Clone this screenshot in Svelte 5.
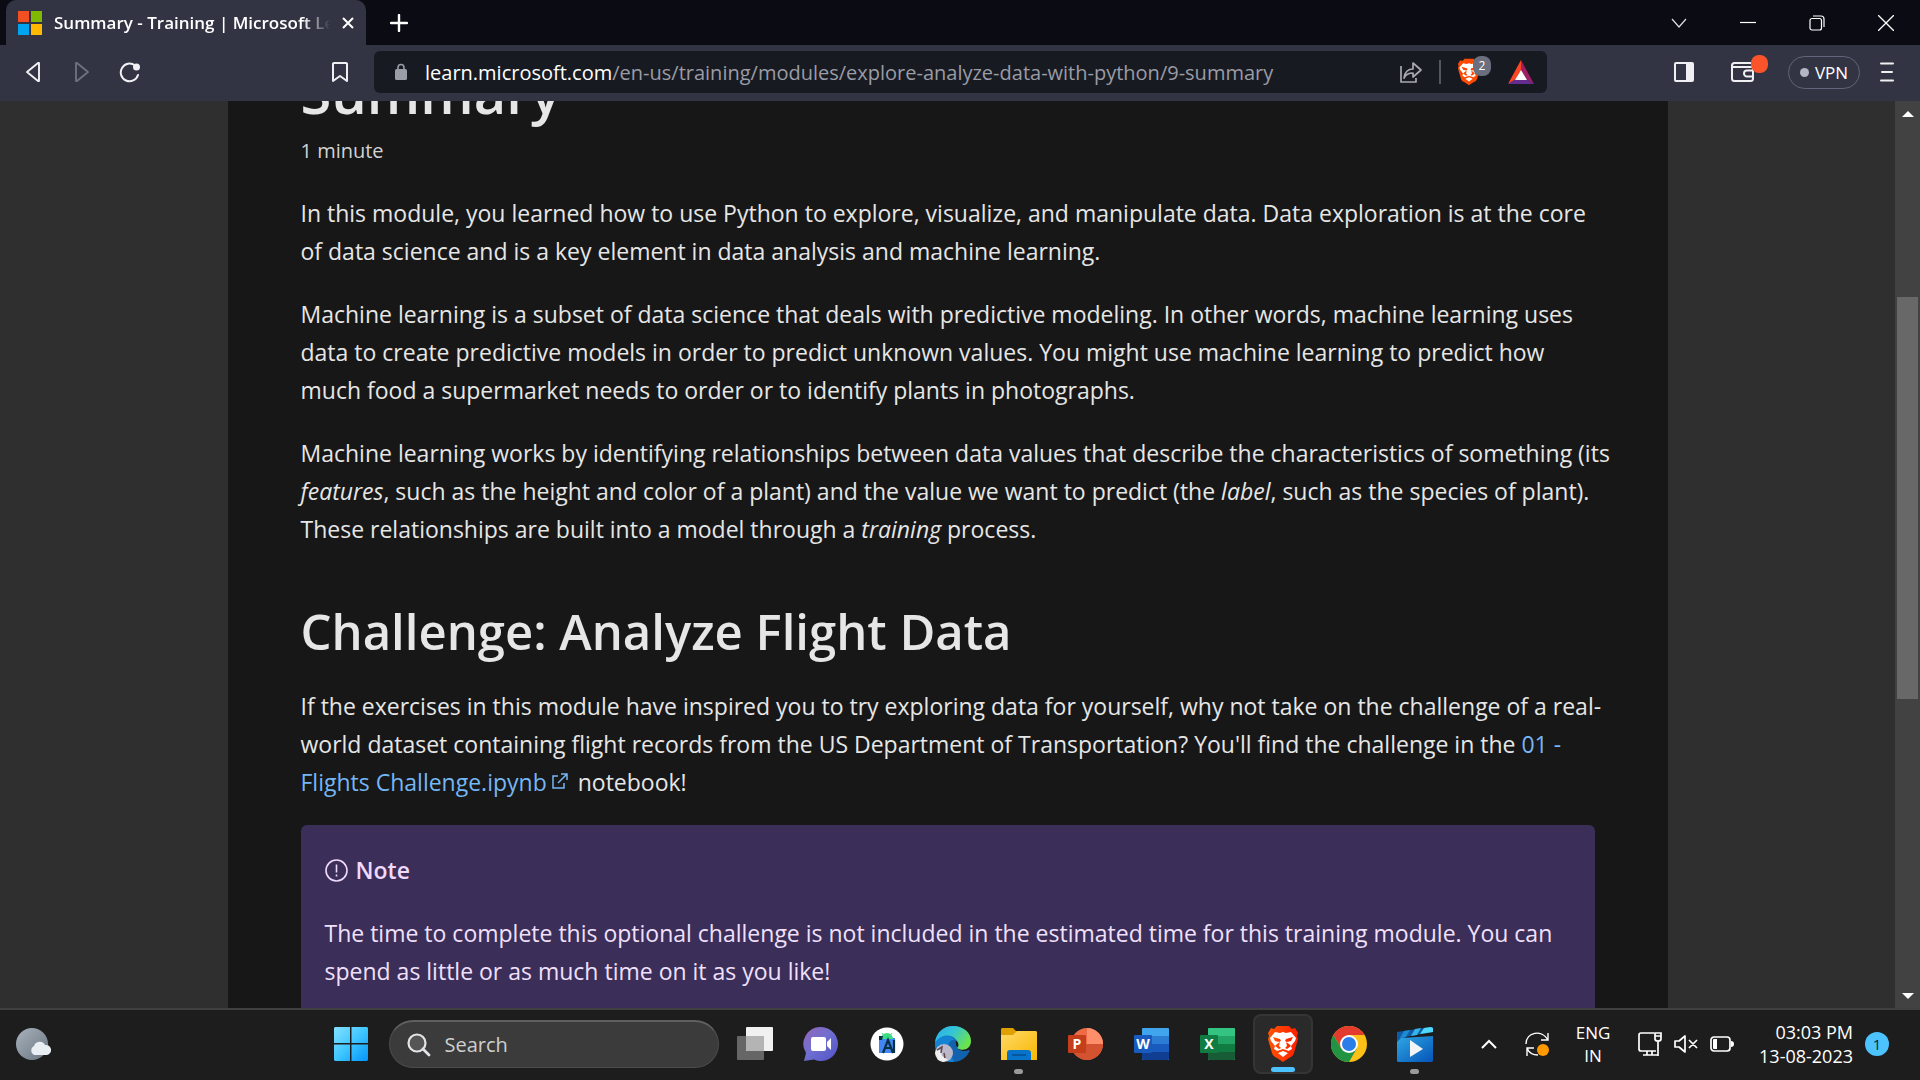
<script>
  const officeApps = {
    word: { letter: 'W', bars: ['#41a5ee', '#2b7cd3', '#185abd', '#103f91'], tile: '#185abd' },
    excel: { letter: 'X', bars: ['#33c481', '#21a366', '#107c41', '#185c37'], tile: '#107c41' }
  };
</script>

{#snippet lion(fill)}
  <path {fill} d="M12 0h12l3 3 3-1 3 5-1 3 1 3-4 14c-1 3-3 4-5 5l-6 4-6-4c-2-1-4-2-5-5L3 13l1-3-1-3 3-5 3 1z" />
  <path fill="#fff" d="M10 6l5 1 3-1 3 1 5-1 5 6-1 3-4 5 1 3-5 3 1 1-5 4-5-4 1-1-5-3 1-3-4-5-1-3z" />
  <path {fill} d="M8 11l7 2 1 2-2 1-4-1zM28 11l-7 2-1 2 2 1 4-1zM15 16l-1 4 2 2-2 1-4-3 2-2zM21 16l1 4-2 2 2 1 4-3-2-2zM12 25l6-2 6 2-1 2-5-2-5 2z" />
{/snippet}

{#snippet office(app)}
  <svg width="36" height="36" viewBox="0 0 36 36" aria-hidden="true">
    <rect x="9" y="2" width="27" height="32" rx="1" fill={app.bars[0]} />
    <path d="M9 10h27v8H9z" fill={app.bars[1]} />
    <path d="M9 18h27v8H9z" fill={app.bars[2]} />
    <path d="M9 26h27v7l-1 1H10l-1-1z" fill={app.bars[3]} />
    <rect x="1" y="9" width="18" height="18" rx="1" fill={app.tile} />
    <text x="10" y="23" text-anchor="middle" class="letter">{app.letter}</text>
  </svg>
{/snippet}

<div class="screen">
  <header class="titlebar">
    <div class="tab">
      <svg width="24" height="24" viewBox="0 0 24 24" aria-hidden="true">
        <path fill="#f25022" d="M0 0h11v11H0z" /><path fill="#7fba00" d="M13 0h11v11H13z" />
        <path fill="#00a4ef" d="M0 13h11v11H0z" /><path fill="#ffb900" d="M13 13h11v11H13z" />
      </svg>
      <span class="tab-title">Summary - Training | Microsoft Learn</span>
      <button aria-label="Close tab">
        <svg width="12" height="12" viewBox="0 0 12 12" stroke="#fff" stroke-width="2"><path d="M1 1l10 10M11 1 1 11" /></svg>
      </button>
    </div>
    <button class="new-tab" aria-label="New tab">
      <svg width="18" height="18" viewBox="0 0 18 18" stroke="#fff" stroke-width="2.4" stroke-linecap="round"><path d="M9 1v16M1 9h16" /></svg>
    </button>
    <div class="window-controls">
      <button aria-label="Search tabs">
        <svg width="16" height="16" viewBox="0 0 16 16" fill="none" stroke="#ddd" stroke-width="1.2"><path d="M1 4l7 8 7-8" /></svg>
      </button>
      <button aria-label="Minimize">
        <svg width="16" height="16" viewBox="0 0 16 16" stroke="#fff" stroke-width="1.2"><path d="M0 7.500h16" /></svg>
      </button>
      <button aria-label="Restore">
        <svg width="16" height="16" viewBox="0 0 16 16" fill="none" stroke="#fff" stroke-width="1.2"><rect x="1" y="3.500" width="11.500" height="11.500" rx="2" /><path d="M4 1h8c2 0 3 1 3 3v8" /></svg>
      </button>
      <button aria-label="Close">
        <svg width="16" height="16" viewBox="0 0 16 16" stroke="#fff" stroke-width="1.3"><path d="M0 0l16 16M16 0 0 16" /></svg>
      </button>
    </div>
  </header>

  <nav class="toolbar" aria-label="Browser">
    <button aria-label="Back">
      <svg width="20" height="22" viewBox="0 0 20 22" fill="none" stroke="#f0f0f4" stroke-width="1.9" stroke-linejoin="round"><path d="M15 2v18h-1L3 11l11-9z" /></svg>
    </button>
    <button aria-label="Forward" disabled>
      <svg width="20" height="22" viewBox="0 0 20 22" fill="none" stroke="#6d707e" stroke-width="1.9" stroke-linejoin="round"><path d="M4 2v18h1l11-9L5 2z" /></svg>
    </button>
    <button aria-label="Reload">
      <svg width="22" height="22" viewBox="0 0 22 22" fill="none" stroke="#f0f0f4" stroke-width="2" stroke-linecap="round"><path d="M16 4.500A8.800 8.800 0 1 0 19 14" /><circle cx="17.500" cy="6" r="2.500" fill="#f0f0f4" /></svg>
    </button>
    <button class="bookmark" aria-label="Bookmark this page">
      <svg width="18" height="22" viewBox="0 0 18 22" fill="none" stroke="#f0f0f4" stroke-width="2" stroke-linejoin="round"><path d="M2 2.500Q2 2 3 2h12q1 0 1 .5V20l-7-5-7 5z" /></svg>
    </button>
    <div class="address">
      <svg width="12" height="18" viewBox="0 0 12 18" aria-hidden="true"><rect y="6" width="12" height="11" rx="1.500" fill="#9a9ca6" /><path d="M3 7V4.500a3 3 0 0 1 6 0V7" fill="none" stroke="#9a9ca6" stroke-width="1.600" /></svg>
      <a class="url" href="#top"><span>learn.microsoft.com</span>/en-us/training/modules/explore-analyze-data-with-python/9-summary</a>
      <button aria-label="Share">
        <svg width="24" height="24" viewBox="0 0 24 24" fill="none" stroke="#a8aab0" stroke-width="1.700" stroke-linejoin="round"><path d="M2 6v16h15v-4" /><path d="M5 18c1-7 5-9 9-9V3l8 7-8 7v-4c-4 0-7 1-9 5z" /></svg>
      </button>
      <i class="divider"></i>
      <button class="shields" aria-label="Brave Shields, 2 blocked">
        <svg width="24" height="28" viewBox="2 -1 32 38">{@render lion('#fb4b05')}</svg>
        <span class="count">2</span>
      </button>
      <button aria-label="Brave Rewards">
        <svg width="28" height="24" viewBox="0 0 28 24"><path fill="#ff4724" d="M14 0 1 24l8-5 5-9z" /><path fill="#9e1f63" d="M14 0v10l5 9 8 5z" /><path fill="#662d91" d="M1 24h26l-8-5H9z" /><path fill="#fff" d="M14 10 8 20h12z" /></svg>
      </button>
    </div>
    <div class="actions">
      <button aria-label="Side panel">
        <svg width="20" height="20" viewBox="0 0 20 20"><rect x="1" y="1" width="18" height="18" rx="1" fill="none" stroke="#f0f0f4" stroke-width="2" /><path fill="#f0f0f4" d="M12 1h7v18h-7z" /></svg>
      </button>
      <button class="wallet" aria-label="Wallet">
        <svg width="26" height="22" viewBox="0 0 26 22" fill="none" stroke="#f0f0f4" stroke-width="2" stroke-linejoin="round"><rect x="2" y="2" width="21" height="18" rx="2.500" /><path d="M2 6h20M23 9.500h-6a3 3 0 0 0 0 6h6" /></svg>
        <span class="alert"></span>
      </button>
      <button class="vpn"><i></i>VPN</button>
      <button class="menu" aria-label="Menu">
        <svg width="14" height="20" viewBox="0 0 14 20" stroke="#f0f0f4" stroke-width="2" stroke-linecap="round"><path d="M1 1.500h12M2 10h10M1 18.500h12" /></svg>
      </button>
    </div>
  </nav>

  <div class="viewport">
    <main class="article" id="top">
      <h1>Summary</h1>
      <div class="duration">1 minute</div>
      <p>In this module, you learned how to use Python to explore, visualize, and manipulate data. Data exploration is at the core<br /> of data science and is a key element in data analysis and machine learning.</p>
      <p>Machine learning is a subset of data science that deals with predictive modeling. In other words, machine learning uses<br /> data to create predictive models in order to predict unknown values. You might use machine learning to predict how<br /> much food a supermarket needs to order or to identify plants in photographs.</p>
      <p>Machine learning works by identifying relationships between data values that describe the characteristics of something (its<br /> <em>features</em>, such as the height and color of a plant) and the value we want to predict (the <em>label</em>, such as the species of plant).<br /> These relationships are built into a model through a <em>training</em> process.</p>
      <h2>Challenge: Analyze Flight Data</h2>
      <p>If the exercises in this module have inspired you to try exploring data for yourself, why not take on the challenge of a real-<br />world dataset containing flight records from the US Department of Transportation? You'll find the challenge in the <a href="#challenge">01 -<br /> Flights Challenge.ipynb<svg class="external" width="16" height="16" viewBox="0 0 16 16" fill="none" stroke="currentColor" stroke-width="1.500"><path d="M6 3H1v12h11v-5M9 1h6v6M15 1 6 10" /></svg></a> notebook!</p>
      <aside class="note">
        <div class="note-title">
          <svg width="23" height="23" viewBox="0 0 23 23" fill="none" stroke="currentColor" stroke-width="1.600" aria-hidden="true"><circle cx="11.500" cy="11.500" r="10.500" /><path d="M11.500 5.500v8M11.500 15.500v2" /></svg>
          Note
        </div>
        <p>The time to complete this optional challenge is not included in the estimated time for this training module. You can spend as little or as much time on it as you like!</p>
      </aside>
    </main>
    <div class="scrollbar" aria-hidden="true">
      <svg width="12" height="6" viewBox="0 0 12 6"><path fill="#fff" d="M0 6 6 0l6 6z" /></svg>
      <div class="track"><div class="thumb"></div></div>
      <svg width="12" height="6" viewBox="0 0 12 6"><path fill="#fff" d="M0 0l6 6 6-6z" /></svg>
    </div>
  </div>

  <footer class="taskbar">
    <button class="weather" aria-label="Weather">
      <svg width="36" height="34" viewBox="0 0 36 34">
        <defs><linearGradient id="moon" x2="1" y2="1"><stop stop-color="#a9b3bd" /><stop offset="1" stop-color="#6b7580" /></linearGradient></defs>
        <circle cx="17" cy="17" r="16" fill="url(#moon)" />
        <path fill="#e9eef3" d="M19 28a5 5 0 0 1 0-9 6 6 0 0 1 11-1 5 5 0 0 1 2 10z" />
      </svg>
    </button>
    <div class="apps">
      <button aria-label="Start">
        <svg width="36" height="36" viewBox="0 0 36 36">
          <defs><linearGradient id="win" gradientUnits="userSpaceOnUse" x1="0" y1="0" x2="36" y2="36"><stop stop-color="#8ae2ff" /><stop offset=".5" stop-color="#3fc6ff" /><stop offset="1" stop-color="#0091f8" /></linearGradient></defs>
          <path fill="url(#win)" d="M1 2l1-1h15v16H1zM18.500 1H34l1 1v15H18.500zM1 18.500h16V35H2l-1-1zM18.500 18.500H35V34l-1 1H18.500z" />
        </svg>
      </button>
      <label class="search">
        <svg width="24" height="24" viewBox="0 0 24 24" fill="#555" stroke="#e4e4e8" stroke-width="2.200" aria-hidden="true"><circle cx="10" cy="10" r="8.500" /><path d="M16 16l6 6" stroke-width="2.800" stroke-linecap="round" /></svg>
        <input type="text" placeholder="Search" aria-label="Search" />
      </label>
      <button aria-label="Task view">
        <svg width="36" height="36" viewBox="0 0 36 36"><rect x="0" y="10" width="27" height="24" rx="1" fill="#666" /><rect x="9" y="1" width="27" height="24" rx="1" fill="#f1f1f1" /><path fill="#b4b4b4" d="M9 10h18v15H10l-1-1z" /></svg>
      </button>
      <button aria-label="Chat">
        <svg width="36" height="36" viewBox="0 0 36 36">
          <defs><linearGradient id="chat" x2="1" y2="1"><stop stop-color="#9465b5" /><stop offset=".45" stop-color="#716fd0" /><stop offset="1" stop-color="#5053c8" /></linearGradient></defs>
          <path fill="url(#chat)" d="M18 1a17 17 0 1 1-7 32.500L1 35l2-8A17 17 0 0 1 18 1z" />
          <rect x="8" y="11" width="15" height="14" rx="2" fill="#fff" /><path fill="#fff" d="M24 16l4-4v12l-4-4z" />
        </svg>
      </button>
      <button aria-label="Android Studio">
        <svg width="36" height="36" viewBox="0 0 36 36">
          <circle cx="18" cy="18" r="16.500" fill="#fff" /><path fill="#4285f4" d="M10 12h16v15H10z" /><path fill="#3ddc84" d="M12 13a6 6 0 0 1 12 0z" /><path stroke="#3ddc84" d="M13 7l2 3M23 7l-2 3" /><path fill="#073042" d="M10 10h4l-1 4h-3z" />
          <path d="M14 27l5-13 5 13M16 22h6M25 14v13" fill="none" stroke="#073042" stroke-width="2.200" />
        </svg>
      </button>
      <button aria-label="Microsoft Edge">
        <svg width="36" height="36" viewBox="0 0 36 36">
          <defs><linearGradient id="edge" x2="1" y2=".5"><stop stop-color="#28aeea" /><stop offset=".5" stop-color="#35c5d5" /><stop offset="1" stop-color="#6ae34d" /></linearGradient></defs>
          <circle cx="18" cy="18" r="18" fill="#1262ad" />
          <path fill="#1d1d1d" d="M21 15c-1 7 4 12 13 9l4 2-1-12-8-2z" />
          <path fill="#1583d4" d="M0 18C2 8 14 6 20 14c-5-1-9 5-5 12l4 10C8 37 0 28 0 18z" />
          <path fill="url(#edge)" d="M0 17C1 6 9 0 18 0c11 0 18 7 18 15 0 8-8 11-14 7 2-2 2-4 0-7C17 7 5 8 0 17z" />
          <circle cx="9" cy="27" r="9" fill="#bcb8cb" /><path fill="#f1eeee" d="M3 21l3 5 1 4 6 4-5 2-5-2-3-7z" /><path stroke="#5b4948" stroke-width="1.500" fill="none" d="M2 24l5-3-1 6M9 27l1 5" />
        </svg>
      </button>
      <button class="open" aria-label="File Explorer">
        <svg width="36" height="36" viewBox="0 0 36 36">
          <defs><linearGradient id="folder" x2="1" y2="1"><stop stop-color="#ffd969" /><stop offset="1" stop-color="#f8b700" /></linearGradient></defs>
          <path fill="#dfa000" d="M0 3l1-1h11l3 3h12v9H0z" /><path fill="url(#folder)" d="M0 9h12l4-4h19l1 1v28H0z" /><path fill="#0873ca" d="M6 34V27q0-3 3-3h18q3 0 3 3v7z" /><path stroke="#044b91" stroke-width="1.500" d="M11 29h14" />
        </svg>
      </button>
      <button aria-label="PowerPoint">
        <svg width="36" height="36" viewBox="0 0 36 36"><circle cx="20" cy="18" r="16" fill="#ed6c47" /><path fill="#ff8f6b" d="M20 2a16 16 0 0 1 16 16H20z" /><path fill="#d35230" d="M36 18a16 16 0 0 1-32 0z" /><rect x="1" y="9" width="18" height="18" rx="1" fill="#c43e1c" /><text x="10" y="23" text-anchor="middle" class="letter">P</text></svg>
      </button>
      <button aria-label="Word">{@render office(officeApps.word)}</button>
      <button aria-label="Excel">{@render office(officeApps.excel)}</button>
      <button class="active" aria-label="Brave">
        <svg width="36" height="36" viewBox="0 0 36 36">
          <defs><linearGradient id="brave"><stop stop-color="#ff5500" /><stop offset="1" stop-color="#ff1f00" /></linearGradient></defs>
          {@render lion('url(#brave)')}
        </svg>
      </button>
      <button aria-label="Chrome">
        <svg width="36" height="36" viewBox="0 0 36 36"><circle cx="18" cy="18" r="18" fill="#fbc116" /><path fill="#e33b2e" d="M2.400 9A18 18 0 0 1 33.600 9H18l-7.800 13.500z" /><path fill="#229342" d="M2.400 9A18 18 0 0 0 18 36l7.800-13.500-15.600 0z" /><circle cx="18" cy="18" r="9" fill="#fff" /><circle cx="18" cy="18" r="7" fill="#2b7de9" /></svg>
      </button>
      <button class="open" aria-label="Movies &amp; TV">
        <svg width="36" height="36" viewBox="0 0 36 36">
          <defs><linearGradient id="film" x2="1" y2="1"><stop stop-color="#2fa8e4" /><stop offset="1" stop-color="#0553b8" /></linearGradient></defs>
          <path fill="#0e5ca8" d="M0 6l34-5 2 1v4L8 11v5H0z" /><path fill="#1d8ad2" d="M7 5l6-1-4 7-6 1z" /><path fill="#35b4ec" d="M18 3l6-1-4 7-6 1z" /><path fill="#50d9ff" d="M27 2l7-1 2 1v4l-13 2z" />
          <path fill="url(#film)" d="M0 16l4-4 32-2v25l-1 1H1l-1-1z" /><path fill="#f2f4f6" d="M13 14l13 9-13 8z" />
        </svg>
      </button>
    </div>
    <div class="tray">
      <button aria-label="Show hidden icons"><svg width="16" height="10" viewBox="0 0 16 10" fill="none" stroke="#fff" stroke-width="2"><path d="M1 9l7-7 7 7" /></svg></button>
      <button class="update" aria-label="Updates"><svg width="26" height="26" viewBox="0 0 26 26" fill="none" stroke="#fff" stroke-width="1.400"><path d="M2 13C2 1 18-2 24 9M24 2v7h-7M3 25v-8h7M3 17c2 5 6 7 11 7" /><circle cx="19" cy="19" r="6" fill="#ff9900" stroke="none" /></svg></button>
      <button class="lang">ENG<br />IN</button>
      <button class="status" aria-label="Network, volume and battery">
        <svg width="26" height="26" viewBox="0 0 26 26" fill="none" stroke="#fff" stroke-width="1.700"><path d="M17 2H4Q2 2 2 4v14q0 2 2 2h15M6 24h15M10 20v4M15 20v4M18 2h6v6q0 2-3 2t-3-2zM18 5h6M21 10v15" /></svg>
        <svg width="24" height="20" viewBox="0 0 24 20" fill="none" stroke="#fff" stroke-width="1.700" stroke-linejoin="round"><path d="M1 7h4l6-5v16l-6-5H1zM15 6l8 8M23 6l-8 8" /></svg>
        <svg width="26" height="16" viewBox="0 0 26 16" fill="none" stroke="#fff" stroke-width="1.700"><rect x="2" y="1" width="19" height="14" rx="3" /><path fill="#fff" stroke="none" d="M4 4q0-1 1-1h3v10H5q-1 0-1-1zM22 5q3 0 3 3t-3 3z" /></svg>
      </button>
      <button class="clock">03:03 PM<br />13-08-2023</button>
      <button class="badge" aria-label="1 notification">1</button>
    </div>
  </footer>
</div>

<style>
  :global(body) { margin: 0; background: #1d1d1d; }
  .screen { height: 100vh; display: flex; flex-direction: column; overflow: hidden; color: #fff; font-family: "Open Sans", "Noto Sans", sans-serif; }
  button { display: flex; align-items: center; justify-content: center; padding: 0; border: 0; background: none; color: inherit; font: inherit; }
  svg { display: block; flex: none; }

  .titlebar { display: flex; flex: none; height: 45px; padding-left: 6px; background: #0b0b14; }
  .tab { display: flex; align-items: center; box-sizing: border-box; width: 360px; padding: 0 12px; border-radius: 10px 10px 0 0; background: #323443; }
  .tab-title { flex: 1; min-width: 0; margin: 0 12px; overflow: hidden; white-space: nowrap; font-size: 17px; font-weight: 600; line-height: 24px; mask-image: linear-gradient(90deg, #000 90%, transparent); }
  .new-tab { width: 66px; }
  .window-controls { display: flex; margin-left: auto; }
  .window-controls button { width: 69px; }

  .toolbar { display: flex; flex: none; align-items: center; height: 56px; padding: 0 26px 2px 24px; box-sizing: border-box; background: #323443; }
  .toolbar > button { width: 20px; margin-right: 28px; }
  .toolbar > .bookmark { margin: 0 24px 0 auto; }
  .address { display: flex; align-items: center; gap: 16px; flex: 0 1 1173px; min-width: 0; height: 42px; padding: 0 12px 0 21px; box-sizing: border-box; border-radius: 6px; background: #181a21; }
  .url { flex: 1; min-width: 0; margin-left: 2px; overflow: hidden; white-space: nowrap; font-size: 20px; color: #9a9ca6; text-decoration: none; }
  .url span { color: #fff; }
  .divider { width: 2px; height: 24px; background: #55575f; }
  .shields { position: relative; width: 34px; justify-content: flex-start; }
  .count { position: absolute; top: -2px; right: 0; width: 18px; height: 20px; border-radius: 8px; background: #6b6e7c; font-size: 12px; line-height: 20px; text-align: center; }
  .actions { display: flex; align-items: center; justify-content: flex-end; width: 347px; gap: 18px; }
  .wallet { position: relative; justify-content: flex-start; width: 40px; margin-left: 18px; }
  .alert { position: absolute; top: -6px; right: 2px; width: 17px; height: 18px; border-radius: 8px; background: #fb542b; }
  .vpn { gap: 6px; width: 72px; height: 33px; box-sizing: border-box; border: 1px solid #62657c; border-radius: 17px; font-size: 17px; }
  .vpn i { width: 9px; height: 9px; border-radius: 50%; background: #b4b6c8; }
  .menu { margin-left: 2px; }

  .viewport { display: flex; flex: 1; min-height: 0; overflow: hidden; background: #2f2f2f; }
  .article { flex: 0 1 1294px; min-width: 0; padding: 0 73px; margin: -41px auto 0; background: #171717; color: #e6e6e6; font-size: 23px; line-height: 38px; }
  h1, h2 { margin: 0; font-size: 49px; font-weight: 600; line-height: 64px; }
  h1 { font-size: 56px; }
  .duration { margin: 8px 0 -1px; font-size: 20px; line-height: 38px; color: #d2d2d2; }
  p { margin: 25px -24px 0 0; }
  h2 { margin-top: 51px; }
  h2 + p { margin-top: 24px; }
  a { color: #75b6f5; text-decoration: none; }
  .external { display: inline-block; margin: 0 4px 0 5px; vertical-align: 2px; }
  .note { margin-top: 24px; padding: 26px 24px 48px; border-radius: 6px; background: #3b2e58; color: #efd9fd; }
  .note-title { display: flex; align-items: center; gap: 8px; font-size: 23px; font-weight: 600; }
  .note p { margin: 25px 0 0; color: #f0e0fb; }
  .scrollbar { display: flex; flex: none; flex-direction: column; align-items: center; width: 25px; padding: 10px 0 9px; box-sizing: border-box; background: #424242; }
  .track { display: flex; flex: 1; width: 21px; flex-direction: column; padding-top: 180px; }
  .thumb { height: 402px; background: #686868; }

  .taskbar { display: grid; grid-template-columns: 11fr auto 16fr; align-items: center; flex: none; height: 72px; padding: 0 31px 2px 15px; box-sizing: border-box; border-top: 2px solid #404040; background: #1d1d1d; }
  .weather { justify-self: start; }
  .apps { display: flex; align-items: center; gap: 6px; }
  .apps button { position: relative; width: 60px; height: 60px; box-sizing: border-box; border-radius: 8px; }
  .apps .active { border: 2px solid #353535; background: #2a2a2a; }
  .open::after, .active::after { content: ''; position: absolute; bottom: 0; width: 9px; height: 5px; border-radius: 3px; background: #9a9a9a; }
  .active::after { width: 24px; background: #4cc2ff; }
  .search { display: flex; align-items: center; gap: 14px; width: 330px; height: 48px; padding: 0 17px; margin-left: 2px; box-sizing: border-box; border: 1px solid #4b4b4b; border-top: 2px solid #5f5f5f; border-radius: 24px; background: #3b3b3b; }
  .search input { flex: 1; min-width: 0; padding: 0; border: 0; outline: 0; background: none; color: #fff; font: 20px "Open Sans", sans-serif; }
  .search input::placeholder { color: #cfcfcf; opacity: 1; }
  .letter { fill: #fff; font: 700 14px "Open Sans", sans-serif; }
  .tray { display: flex; align-items: center; justify-self: end; font-size: 17px; line-height: 23px; white-space: nowrap; }
  .update { margin: 0 21px 0 27px; }
  .lang { width: 44px; margin-right: 22px; text-align: center; }
  .status { gap: 11px; margin-right: 24px; }
  .clock { justify-content: flex-end; min-width: 92px; font-size: 18px; line-height: 24px; text-align: right; }
  .badge { width: 24px; height: 24px; margin-left: 12px; border-radius: 50%; background: #4cc2ff; color: #10222d; font-size: 15px; }
</style>
